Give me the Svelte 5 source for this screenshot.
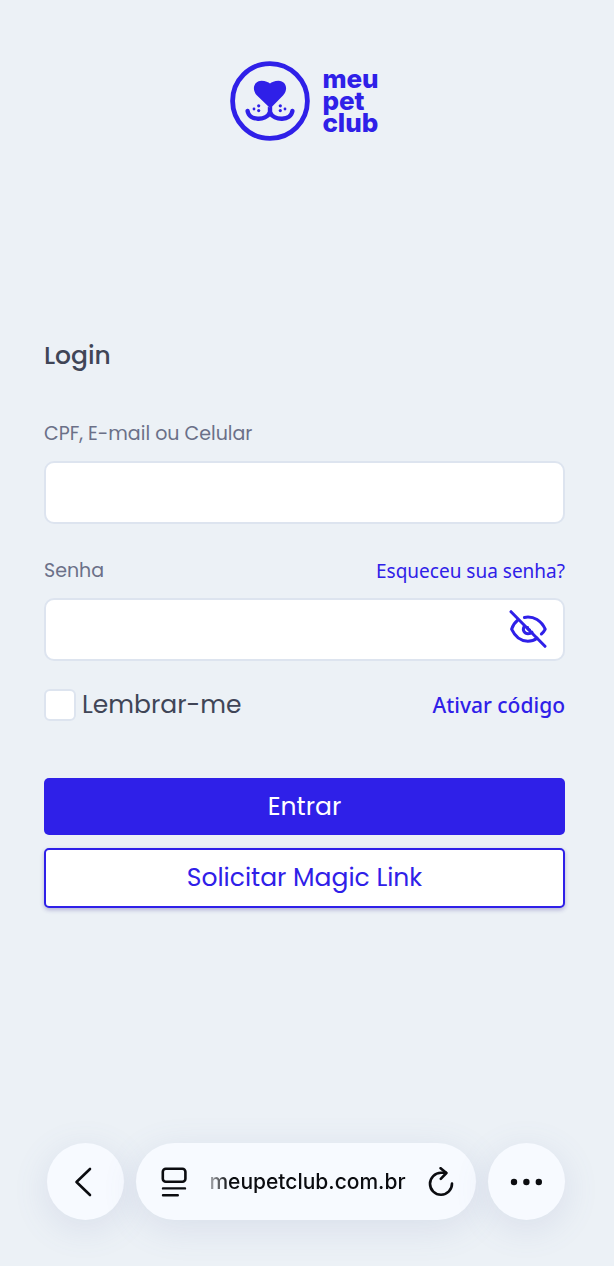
<script>
  let login = "";
  let password = "";
  let remember = false;
  let showPassword = false;

  function togglePassword() {
    showPassword = !showPassword;
  }
</script>

<div class="page">
  <header class="logo">
    <svg class="logo-mark" viewBox="0 0 80 80" aria-hidden="true">
      <circle cx="40" cy="40" r="37.4" fill="none" stroke="currentColor" stroke-width="4.8" />
      <path
        d="M40 47 L27 34.5 C21.5 29 23.5 20 31.5 19.8 C35.5 19.8 38.5 21.3 40 22.6 C41.5 21.3 44.5 19.8 48.5 19.8 C56.5 20 58.5 29 53 34.5 L42.2 45.5 V53 H37.8 V45.5 Z"
        fill="currentColor"
      />
      <path
        d="M17.6 50 C19 60 36 60 40 51.5 C44 60 61 60 62.4 50"
        fill="none"
        stroke="currentColor"
        stroke-width="4.4"
        stroke-linecap="round"
        stroke-linejoin="round"
      />
      <g fill="currentColor">
        <circle cx="24" cy="48" r="1.4" />
        <circle cx="28.7" cy="44.8" r="1.6" />
        <circle cx="28.7" cy="49.6" r="1.6" />
        <circle cx="50.3" cy="44.8" r="1.6" />
        <circle cx="50.3" cy="49.6" r="1.6" />
        <circle cx="55" cy="48" r="1.4" />
      </g>
    </svg>
    <div class="logo-name">
      <span>meu</span>
      <span>pet</span>
      <span>club</span>
    </div>
  </header>

  <form on:submit|preventDefault>
    <h1>Login</h1>

    <div class="field">
      <div class="label-row">
        <label for="login">CPF, E-mail ou Celular</label>
      </div>
      <input id="login" class="text-input" type="text" bind:value={login} />
    </div>

    <div class="field">
      <div class="label-row">
        <label for="password">Senha</label>
        <a href="#senha">Esqueceu sua senha?</a>
      </div>
      <div class="password-box">
        <input
          id="password"
          class="text-input"
          type={showPassword ? "text" : "password"}
          value={password}
          on:input={(e) => (password = e.currentTarget.value)}
        />
        <button class="eye" type="button" aria-label="Mostrar senha" on:click={togglePassword}>
          <svg viewBox="-1 -1 38 38" width="38" height="38" aria-hidden="true">
            <g fill="none" stroke="currentColor" stroke-width="3" stroke-linecap="round" stroke-linejoin="round">
              <path d="M1 .7 L35 35.3" />
              <path d="M7.6 9.2 C4.5 11.6 2.7 14.8 1.6 18.2 C5 25.6 10.8 30.2 17.8 30.2 C21.2 30.2 24.4 29.2 27 27.2" />
              <path d="M14.4 6.4 C24 4.7 31.5 10 35.2 18.2 C34.2 20 33 21.8 31.4 23" />
              <path d="M14.2 15.4 C12 19.4 14.6 22.8 18 22.8 C19.6 22.8 21 22.2 22 21.2 M17.6 16.6 C17.8 18 18.6 18.8 19.6 19" />
            </g>
          </svg>
        </button>
      </div>
    </div>

    <div class="options">
      <label class="remember">
        <input type="checkbox" bind:checked={remember} />
        <span>Lembrar-me</span>
      </label>
      <a class="activate" href="#codigo">Ativar código</a>
    </div>

    <div class="actions">
      <button class="primary" type="submit">Entrar</button>
      <button class="secondary" type="button">Solicitar Magic Link</button>
    </div>
  </form>

  <nav class="toolbar">
    <button class="round" type="button" aria-label="Voltar">
      <svg viewBox="0 0 24 32" width="24" height="32" aria-hidden="true">
        <path d="M16 3 L2.5 16 L16 29" fill="none" stroke="currentColor" stroke-width="2.6" stroke-linecap="round" stroke-linejoin="round" />
      </svg>
    </button>
    <div class="address">
      <button class="plain" type="button" aria-label="Opções da página">
        <svg viewBox="0 0 26 30" width="26" height="30" aria-hidden="true">
          <g fill="none" stroke="currentColor" stroke-width="2.6" stroke-linecap="round">
            <rect x="1.8" y="1.8" width="22.6" height="13" rx="3" />
            <path d="M2 21.4 H24 M2 28.2 H16.8" stroke-width="2.4" />
          </g>
        </svg>
      </button>
      <span class="url">meupetclub.com.br</span>
      <button class="plain" type="button" aria-label="Recarregar">
        <svg viewBox="0 0 26 30" width="26" height="30" aria-hidden="true">
          <g fill="none" stroke="currentColor" stroke-width="2.6" stroke-linecap="round" stroke-linejoin="round">
            <path d="M24 16.6 A11 11 0 1 1 13 5.8 H18" />
            <path d="M12.6 1.2 L18.4 6 L12.8 11.8" />
          </g>
        </svg>
      </button>
    </div>
    <button class="round" type="button" aria-label="Mais">
      <svg viewBox="0 0 34 8" width="34" height="8" aria-hidden="true">
        <g fill="currentColor">
          <circle cx="4" cy="4" r="3.2" />
          <circle cx="16.4" cy="4" r="3.2" />
          <circle cx="28.8" cy="4" r="3.2" />
        </g>
      </svg>
    </button>
  </nav>
</div>

<style>
  :global(body) {
    margin: 0;
    background: #ecf1f6;
  }

  .page {
    display: flex;
    flex-direction: column;
    box-sizing: border-box;
    min-height: 100vh;
    padding: 61px 49px 46px 44px;
    font-family: Poppins, Inter, sans-serif;
    color: #404556;
  }

  button {
    padding: 0;
    border: 0;
    background: none;
    font-family: inherit;
    color: inherit;
    cursor: pointer;
  }

  svg {
    display: block;
  }

  a {
    color: #2f20e8;
    text-decoration: none;
    font-family: "Noto Sans", sans-serif;
  }

  .logo {
    display: flex;
    align-items: center;
    justify-content: center;
    gap: 12px;
    color: #2f20e8;
  }

  .logo-mark {
    width: 80px;
    height: 80px;
  }

  .logo-name {
    display: flex;
    flex-direction: column;
    font-family: Inter, sans-serif;
    font-size: 26px;
    font-weight: 800;
    line-height: 22px;
  }

  form {
    margin-top: 200px;
  }

  h1 {
    margin: 0 0 51px;
    font-size: 25px;
    font-weight: 500;
    line-height: 30px;
  }

  .field {
    margin-bottom: 35px;
  }

  .label-row {
    display: flex;
    justify-content: space-between;
    margin-bottom: 15px;
    font-size: 19px;
    line-height: 24px;
  }

  .label-row label {
    color: #6b7088;
  }

  .text-input {
    display: block;
    box-sizing: border-box;
    width: 100%;
    height: 63px;
    padding: 0 18px;
    border: 2px solid #dde4ef;
    border-radius: 10px;
    background: #fff;
    font-family: inherit;
    font-size: 25px;
    color: inherit;
  }

  .password-box {
    position: relative;
  }

  .password-box .text-input {
    padding-right: 70px;
  }

  .eye {
    position: absolute;
    top: 12px;
    right: 18px;
    color: #2f20e8;
  }

  .options {
    display: flex;
    align-items: center;
    justify-content: space-between;
    margin-top: -7px;
  }

  .remember {
    display: flex;
    align-items: center;
    gap: 6px;
    font-size: 25px;
    line-height: 32px;
  }

  .remember input {
    appearance: none;
    box-sizing: border-box;
    width: 32px;
    height: 32px;
    margin: 0;
    border: 2px solid #dde4ef;
    border-radius: 6px;
    background: #fff;
  }

  .remember input:checked {
    border-color: #2f20e8;
    background: #2f20e8;
  }

  .activate {
    font-size: 21px;
    font-weight: 500;
  }

  .actions {
    display: flex;
    flex-direction: column;
    gap: 13px;
    margin-top: 57px;
  }

  .actions button {
    height: 57px;
    border-radius: 5px;
    font-size: 25px;
  }

  .actions .primary {
    background: #2f20e8;
    color: #fff;
  }

  .actions .secondary {
    height: 60px;
    border: 2px solid #2f20e8;
    background: #fff;
    color: #2f20e8;
    box-shadow: 0 2px 4px rgba(47, 32, 140, 0.3);
  }

  .toolbar {
    display: flex;
    gap: 12px;
    margin-top: auto;
    margin-left: 3px;
    color: #0b0c10;
  }

  .round,
  .address {
    display: flex;
    align-items: center;
    height: 77px;
    border-radius: 39px;
    background: #f7faff;
    box-shadow: 0 8px 36px rgba(100, 110, 170, 0.14);
  }

  .round {
    flex: none;
    justify-content: center;
    width: 77px;
  }

  .address {
    flex: 1;
    justify-content: space-between;
    box-sizing: border-box;
    padding: 0 22px 0 25px;
  }

  .url {
    font-family: Inter, sans-serif;
    font-size: 21px;
    font-weight: 500;
    -webkit-mask-image: linear-gradient(to right, rgba(0, 0, 0, 0.3), #000 20px);
    mask-image: linear-gradient(to right, rgba(0, 0, 0, 0.3), #000 20px);
  }
</style>
